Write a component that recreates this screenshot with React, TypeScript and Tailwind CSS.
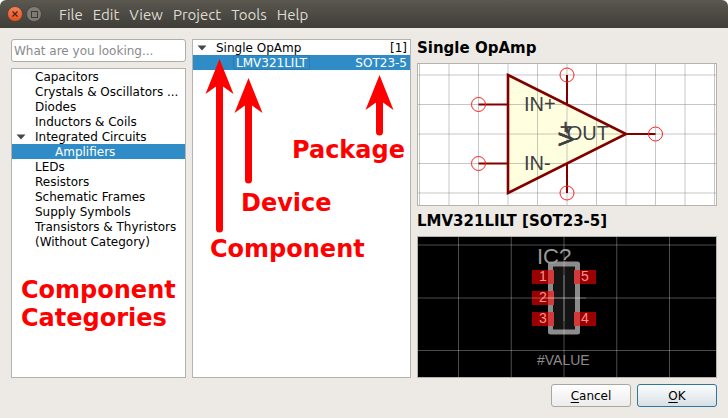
import React from "react";

const categories = [
  { name: "Capacitors" },
  { name: "Crystals & Oscillators ..." },
  { name: "Diodes" },
  { name: "Inductors & Coils" },
  { name: "Integrated Circuits", open: true },
  { name: "Amplifiers", child: true, selected: true },
  { name: "LEDs" },
  { name: "Resistors" },
  { name: "Schematic Frames" },
  { name: "Supply Symbols" },
  { name: "Transistors & Thyristors" },
  { name: "(Without Category)" },
];

const menus = ["File", "Edit", "View", "Project", "Tools", "Help"];

function Expander() {
  return (
    <svg viewBox="0 0 10 6" className="h-[6px] w-[10px]" aria-hidden="true">
      <path d="M0.5 0.5 H9.5 L5 5.5 Z" fill="#474747" />
    </svg>
  );
}

function TitleBar() {
  return (
    <header className="flex h-7 items-center rounded-t-md bg-linear-to-b from-[#5a584f] to-[#3e3d38] pl-[7px]">
      <button aria-label="Close" className="size-4 rounded-full">
        <svg viewBox="0 0 16 16" className="size-4">
          <defs>
            <linearGradient id="close" x1="0" y1="0" x2="0" y2="1">
              <stop offset="0" stopColor="#f4845a" />
              <stop offset="1" stopColor="#e0501f" />
            </linearGradient>
          </defs>
          <circle cx="8" cy="8" r="7.5" fill="url(#close)" stroke="#4a3a30" strokeWidth="0.7" />
          <path d="M5.5 5.5 L10.5 10.5 M10.5 5.5 L5.5 10.5" stroke="#4c2213" strokeWidth="1.2" />
        </svg>
      </button>
      <button aria-label="Maximize" className="ml-[3px] size-4 rounded-full">
        <svg viewBox="0 0 16 16" className="size-4">
          <circle cx="8" cy="8" r="7.5" fill="#7d7b73" stroke="#3d3b36" strokeWidth="0.7" />
          <rect x="5.5" y="5.5" width="6" height="6" fill="none" stroke="#3a3934" />
        </svg>
      </button>
      <nav className="ml-[17px] flex gap-[10px] font-['Ubuntu','Noto_Sans',sans-serif] text-[15px] leading-7 text-[#dfdbd2]">
        {menus.map((m) => (
          <button key={m} className="pt-px">{m}</button>
        ))}
      </nav>
    </header>
  );
}

function CategoryPanel() {
  return (
    <section className="flex flex-col gap-[6px]">
      <input
        aria-label="Search"
        placeholder="What are you looking..."
        className="h-[23px] w-full rounded-[3px] border border-[#b0aca6] bg-white px-[2px] text-[12px] placeholder:text-[#8a8a8a]"
      />
      <div className="flex-1 border border-[#b6b2ac] bg-white">
        <ul>
          {categories.map((c) => (
            <li
              key={c.name}
              className={
                "flex h-[15px] items-center whitespace-nowrap leading-[15px] " +
                (c.selected ? "bg-[#308cc6] text-white" : "")
              }
            >
              <span className="flex w-[23px] shrink-0 pl-1">{c.open && <Expander />}</span>
              <span className={c.child ? "pt-[2px] pl-5" : "pt-[2px]"}>{c.name}</span>
            </li>
          ))}
        </ul>
        <p className="mt-[27px] pl-[9px] text-[24px] leading-7 font-bold text-[#ff0000]">
          Component
          <br />
          Categories
        </p>
      </div>
    </section>
  );
}

function DevicePanel() {
  return (
    <section className="relative border border-[#b6b2ac] bg-white">
      <div className="flex h-[15px] items-center pr-[3px] pl-1 leading-[15px]">
        <Expander />
        <span className="ml-[9px] flex-1 pt-[2px]">Single OpAmp</span>
        <span className="pt-[2px]">[1]</span>
      </div>
      <div className="flex h-[15px] items-center justify-between bg-[#308cc6] pr-[3px] pl-[40px] leading-[15px] text-white">
        <span className="h-[15px] rounded-[2px] border border-[#2a7cb0] px-[2px]">LMV321LILT</span>
        <span className="pt-[2px]">SOT23-5</span>
      </div>
      <svg viewBox="0 0 217 337" className="absolute top-0 left-0 h-[337px] w-[217px]" aria-hidden="true">
        <g fill="#ff0000" stroke="#ff0000" strokeLinecap="round">
          <path d="M26.5 189 V45" strokeWidth="7" />
          <path d="M26.5 19 L40.5 54 L26.5 44 L12.5 54 Z" stroke="none" />
          <path d="M55.5 140 V64" strokeWidth="7" />
          <path d="M55.5 38 L69.5 73 L55.5 63 L41.5 73 Z" stroke="none" />
          <path d="M186.5 92 V60" strokeWidth="7" />
          <path d="M186.5 35 L200.5 70 L186.5 60 L172.5 70 Z" stroke="none" />
        </g>
      </svg>
      <div className="absolute top-0 left-0 text-[24px] leading-7 font-bold text-[#ff0000]">
        <span className="absolute top-[96px] left-[99px]">Package</span>
        <span className="absolute top-[149px] left-[48px]">Device</span>
        <span className="absolute top-[195px] left-[17px]">Component</span>
      </div>
    </section>
  );
}

const steps = [-5, -4, -3, -2, -1, 0, 1, 2, 3, 4, 5];
const pins = [
  [60.5, 40.5, 90, 40.5],
  [60.5, 99.5, 90, 99.5],
  [149, 11, 149, 40.5],
  [149, 129, 149, 99.5],
  [237.5, 70, 208, 70],
];

function SymbolView() {
  return (
    <svg viewBox="0 0 298 141" className="block w-full bg-white" role="img" aria-label="Schematic symbol">
      <path d="M90 11 L208 70 L90 129 Z" fill="#ffffe0" />
      <g stroke="#808080" strokeOpacity="0.45">
        {steps.map((i) => (
          <path key={i} d={`M${149 + i * 29.5} 0 V141`} />
        ))}
        {[-2, -1, 0, 1, 2].map((i) => (
          <path key={i} d={`M0 ${70 + i * 29.5} H298`} />
        ))}
      </g>
      <path d="M90 11 L208 70 L90 129 Z" fill="none" stroke="#800000" strokeWidth="2.6" />
      {pins.map(([x, y, a, b]) => (
        <g key={`${x}-${y}`} fill="none">
          <path d={`M${x} ${y} L${a} ${b}`} stroke="#800000" strokeWidth="2" />
          <circle cx={x} cy={y} r="7" stroke="#ff2020" />
        </g>
      ))}
      <g fill="#404040" fontFamily="Liberation Sans, Arial, sans-serif" fontSize="20">
        <text x="106" y="47">IN+</text>
        <text x="106" y="106">IN-</text>
        <text x="191" y="76" textAnchor="end">OUT</text>
        <g stroke="#404040" strokeWidth="0.6">
          <text transform="translate(155 82) rotate(-90)">V+</text>
          <text transform="translate(155 82) rotate(-90)">V-</text>
        </g>
      </g>
    </svg>
  );
}

const pads = [
  { n: "1", x: 114, y: 33 },
  { n: "2", x: 114, y: 54 },
  { n: "3", x: 114, y: 75 },
  { n: "5", x: 156, y: 33 },
  { n: "4", x: 156, y: 75 },
];

function FootprintView() {
  return (
    <svg viewBox="0 0 298 140" className="block w-full bg-black" role="img" aria-label="Footprint">
      {pads.map((p) => (
        <rect key={p.n} x={p.x} y={p.y} width="22" height="14" fill="#990000" />
      ))}
      <rect x="132.5" y="27" width="27" height="68" fill="#ffffff" fillOpacity="0.08" />
      <rect x="132.5" y="27" width="27" height="68" fill="none" stroke="#8c8c8c" strokeWidth="5" strokeLinejoin="round" />
      {pads.map((p) => (
        <rect
          key={p.n}
          x={p.x < 140 ? 130 : 156}
          y={p.y}
          width="6"
          height="14"
          fill="#d03a3a"
        />
      ))}
      <g stroke="#ffffff" strokeOpacity="0.3">
        {[-2, -1, 0, 1, 2].map((i) => (
          <path key={i} d={`M${146 + i * 52.75} 0 V140`} />
        ))}
        {[8, 61, 113.5].map((y) => (
          <path key={y} d={`M0 ${y} H298`} />
        ))}
        <path d="M146 38 V84 M124 61 H168" />
      </g>
      <g fontFamily="Liberation Sans, Arial, sans-serif">
        <g fill="#ff9090" fontSize="14">
          {pads.map((p) => (
            <text key={p.n} x={p.x + 11} y={p.y + 11} textAnchor="middle">{p.n}</text>
          ))}
        </g>
        <text x="119" y="27" fontSize="22" fill="#999999">IC?</text>
        <text x="119" y="128" fontSize="14" fill="#8c8c8c">#VALUE</text>
      </g>
    </svg>
  );
}

function PreviewPanel() {
  return (
    <section>
      <h2 className="h-6 text-[15px] leading-[18px] font-bold">Single OpAmp</h2>
      <div className="border border-[#b6b2ac]">
        <SymbolView />
      </div>
      <h2 className="h-[30px] text-[15px] leading-[30px] font-bold">LMV321LILT [SOT23-5]</h2>
      <div className="border border-[#b6b2ac]">
        <FootprintView />
      </div>
    </section>
  );
}

export default function App() {
  return (
    <div className="bg-white font-['DejaVu_Sans',sans-serif] text-[12px] text-black">
      <TitleBar />
      <div className="bg-[#edeae5] px-[11px] pt-[11px] pb-[11px]">
        <main className="grid grid-cols-[175fr_219fr_300fr] gap-[6px]">
          <CategoryPanel />
          <DevicePanel />
          <PreviewPanel />
        </main>
        <footer className="mt-[6px] flex justify-end gap-[6px]">
          <button className="h-[23px] w-20 rounded-[3px] border border-[#aaa6a0] bg-linear-to-b from-white to-[#ececec]">
            <span className="underline underline-offset-2">C</span>ancel
          </button>
          <button className="h-[23px] w-20 rounded-[3px] border border-[#2a76a5] bg-linear-to-b from-[#fbfdfe] to-[#d8e0e4]">
            <span className="underline underline-offset-2">O</span>K
          </button>
        </footer>
      </div>
    </div>
  );
}
